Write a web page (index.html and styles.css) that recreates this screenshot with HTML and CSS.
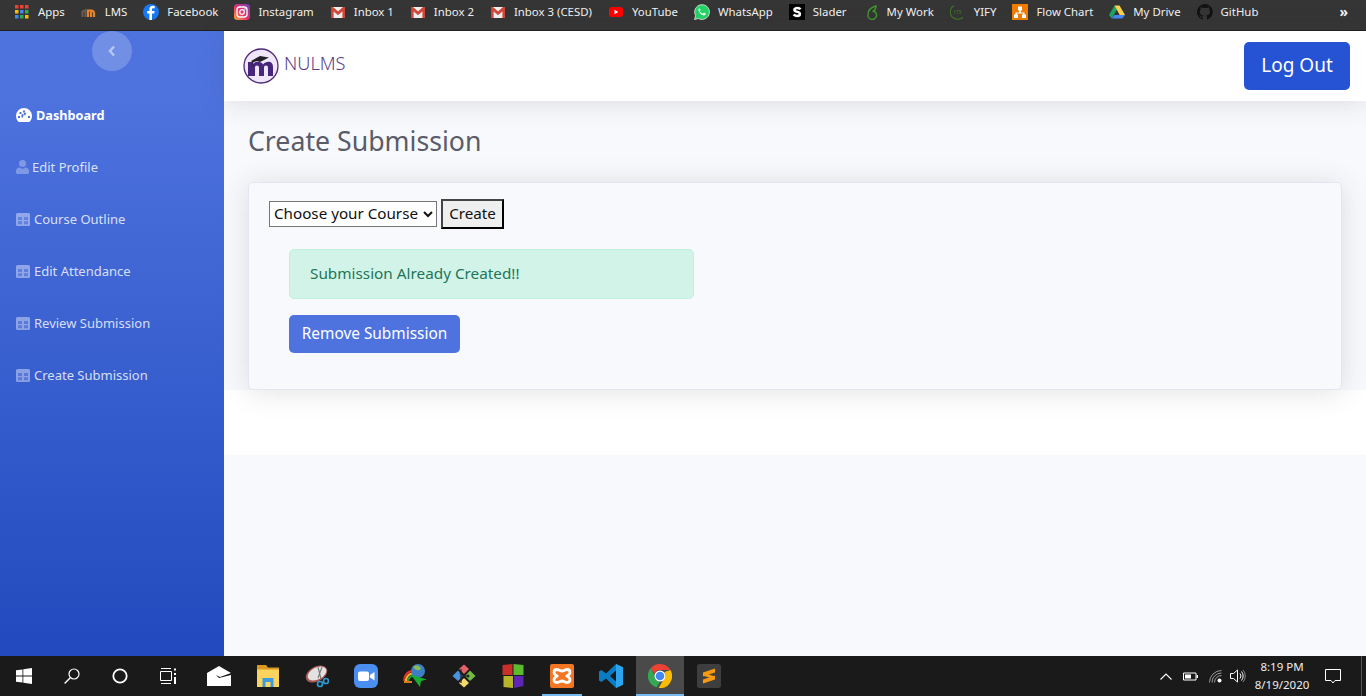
FILE: index.html
```html
<!DOCTYPE html>
<html lang="en">
<head>
<meta charset="utf-8">
<title>Create Submission</title>
<link rel="stylesheet" href="styles.css">
</head>
<body>
<svg class="defs" aria-hidden="true"><defs>
<symbol id="gmail" viewBox="0 0 16 16"><rect x="1" y="3" width="14" height="11" fill="#f1f1f1"/><path d="M3 5.500L8 10l5-4.500v2L8 11.500 3 7.500z" fill="#cfcfcf"/><path d="M1 3h2L8 7.500 13 3h2v11h-2.600V7.200L8 11 3.600 7.200V14H1z" fill="#d44638"/></symbol>
<symbol id="table" viewBox="0 0 14 13"><rect width="14" height="13" rx="1.500" fill-opacity=".55"/><path fill-rule="evenodd" d="M1.500 0h11A1.500 1.500 0 0 1 14 1.500v10a1.500 1.500 0 0 1-1.500 1.500h-11A1.500 1.500 0 0 1 0 11.500v-10A1.500 1.500 0 0 1 1.500 0zM2 4v3h4V4zm6 0v3h4V4zM2 8.200v3h4v-3zm6 0v3h4v-3z"/></symbol>
</defs></svg>

<nav class="bookmarks">
  <a class="bm"><svg class="ic" viewBox="-1 -1 16 16"><path fill="#ea4335" d="M0 0h3.500v3.500H0zM5 0h3.500v3.500H5zM10 0h3.500v3.500H10z"/><path fill="#fbbc05" d="M0 5h3.500v3.500H0z"/><path fill="#4285f4" d="M5 5h3.500v3.500H5zM0 10h3.500v3.500H0z"/><path fill="#34a853" d="M10 5h3.500v3.500H10zM5 10h3.500v3.500H5z"/><path fill="#fbbc05" d="M10 10h3.500v3.500H10z"/></svg><span>Apps</span></a>
  <a class="bm"><svg class="ic" viewBox="0 0 16 16"><path fill="none" stroke="#e8832a" stroke-width="2.200" d="M7 13V6.500h3.500a2.500 2.500 0 0 1 2.500 2.500v4M10 7v6"/><path fill="none" stroke="#6d5a4a" stroke-width="2" d="M1.500 13V7.500L4.500 6v7"/></svg><span>LMS</span></a>
  <a class="bm"><svg class="ic" viewBox="0 0 16 16"><circle cx="8" cy="8" r="8" fill="#1877f2"/><path fill="#fff" d="M9 16V9.500h2.200l.4-2.500H9V5.500c0-.8.400-1.300 1.400-1.300h1.300V2c-.6-.1-1.300-.2-2-.2-2 0-3.300 1.200-3.300 3.400V7H4.200v2.500h2.200V16z"/></svg><span>Facebook</span></a>
  <a class="bm"><svg class="ic" viewBox="0 0 16 16"><defs><linearGradient id="ig" x1="0" y1="1" x2="1" y2="0"><stop offset="0" stop-color="#fdb140"/><stop offset=".45" stop-color="#e8336b"/><stop offset="1" stop-color="#6a3fc8"/></linearGradient></defs><rect width="16" height="16" rx="3.500" fill="url(#ig)"/><rect x="3" y="3" width="10" height="10" rx="2.800" fill="none" stroke="#fff" stroke-width="1.300"/><circle cx="8" cy="8" r="2.300" fill="none" stroke="#fff" stroke-width="1.300"/><circle cx="11" cy="5" r=".8" fill="#fff"/></svg><span>Instagram</span></a>
  <a class="bm"><svg class="ic"><use href="#gmail"/></svg><span>Inbox 1</span></a>
  <a class="bm"><svg class="ic"><use href="#gmail"/></svg><span>Inbox 2</span></a>
  <a class="bm"><svg class="ic"><use href="#gmail"/></svg><span>Inbox 3 (CESD)</span></a>
  <a class="bm"><svg class="ic" viewBox="0 0 16 16"><rect x="1" y="3" width="14" height="10" rx="2.500" fill="#f00"/><path fill="#fff" d="M6.500 5.800v4.400L10.300 8z"/></svg><span>YouTube</span></a>
  <a class="bm"><svg class="ic" viewBox="0 0 16 16"><path fill="#25d366" stroke="#fff" stroke-width=".7" d="M.5 15.500l1.100-3.800A7.400 7.400 0 1 1 4.400 14.500z"/><path fill="#fff" d="M5.600 4.300c-.3 0-.8.400-1 1-.3 1.100.3 2.500 1.500 3.900 1.300 1.400 2.800 2.200 3.900 2.200.8 0 1.700-.6 1.800-1.300.1-.4 0-.6-.2-.7l-1.500-.7c-.2-.1-.4 0-.5.200l-.6.700c-.1.100-.3.200-.5.100-1.100-.5-2-1.300-2.600-2.400-.1-.2 0-.3.100-.4l.4-.6c.1-.2.100-.3 0-.5l-.6-1.300c-.1-.2-.4-.2-.6-.2z"/></svg><span>WhatsApp</span></a>
  <a class="bm"><svg class="ic" viewBox="0 0 16 16"><rect width="16" height="16" fill="#000"/><path fill="none" stroke="#fff" stroke-width="2.500" d="M11.500 5.200C10.800 4.200 9.600 4 8.400 4 6.700 4 5.300 4.700 5.400 5.900c.1 1.400 1.700 1.700 3 2 1.300.3 2.500.7 2.500 2 0 1.400-1.500 2-3 2-1.300 0-2.600-.4-3.300-1.300"/></svg><span>Slader</span></a>
  <a class="bm"><svg class="ic" viewBox="0 0 16 16"><path fill="none" stroke="#3f9a2e" stroke-width="1.400" d="M10.500 7A4.300 4.300 0 1 1 5 10.500C5 7 7.500 3.500 13 2c0 2.500-1 4.500-3.500 5.500"/></svg><span>My Work</span></a>
  <a class="bm"><svg class="ic" viewBox="0 0 16 16"><path fill="none" stroke="#3e7d26" stroke-width="1.100" d="M4 1.800A7 7 0 0 0 4 14.200c2.500 1.300 6 1.300 9-.7"/><text x="3.600" y="10" class="yts">YTS</text></svg><span>YIFY</span></a>
  <a class="bm"><svg class="ic" viewBox="0 0 16 16"><rect width="16" height="16" fill="#ef7d00"/><path fill="#fff" d="M6 2.500h4v4H9v2h3.500v2H14v3.500h-4v-3.500h1V9.500H5v1.000h1V14H2v-3.500h1.500v-2H7v-2H6z"/></svg><span>Flow Chart</span></a>
  <a class="bm"><svg class="ic" viewBox="0 0 16 16"><path fill="#1fa463" d="M5.500 1.500L0 11l2.700 3.500L8 5.500z"/><path fill="#ffd04b" d="M5.500 1.500h5L16 11h-5.300z"/><path fill="#4688f4" d="M2.700 14.500h10.600L16 11H5.300z"/></svg><span>My Drive</span></a>
  <a class="bm"><svg class="ic" viewBox="0 0 16 16"><path fill="#111" d="M8 0a8 8 0 0 0-2.500 15.600c.4.100.5-.2.500-.4v-1.400c-2.200.5-2.700-1-2.700-1-.4-.9-.9-1.200-.9-1.200-.7-.5.100-.5.100-.5.800.1 1.200.8 1.200.8.700 1.200 1.900.9 2.300.7.100-.5.300-.9.500-1.100-1.800-.2-3.700-.9-3.700-4 0-.9.300-1.600.8-2.100-.1-.2-.4-1 .1-2.100 0 0 .7-.2 2.200.8a7.600 7.600 0 0 1 4 0c1.500-1 2.200-.8 2.200-.8.400 1.100.2 1.900.1 2.100.5.600.8 1.300.8 2.100 0 3.100-1.900 3.700-3.700 3.900.3.300.6.800.6 1.500v2.200c0 .2.100.5.600.4A8 8 0 0 0 8 0z"/></svg><span>GitHub</span></a>
  <a class="bm-more">»</a>
</nav>

<div class="app">
  <aside class="sidebar">
    <button class="toggle" type="button" aria-label="Collapse"><svg viewBox="0 0 8 12"><path d="M6 1.500L2 6l4 4.500" fill="none" stroke="currentColor" stroke-width="2.400"/></svg></button>
    <ul class="nav">
      <li class="nav-item active"><svg class="nav-ic gauge" viewBox="0 0 16 14"><path fill="currentColor" fill-rule="evenodd" d="M8 0a8 8 0 0 1 8 8c0 2-.7 3.800-1.900 5.200-.3.400-.7.800-1.300.8H3.200c-.6 0-1-.4-1.300-.8A8 8 0 0 1 0 8a8 8 0 0 1 8-8zM7 2.500v2h2v-2zM3.500 4v2h2V4zM2 8v2h2V8zm10 0v2h2V8zm-1.600-3.400L8.600 9a1.800 1.800 0 1 0-1.800.8L8 5z"/></svg><span>Dashboard</span></li>
      <li class="nav-item"><svg class="nav-ic person" viewBox="0 0 13 14"><circle cx="6.500" cy="3.500" r="3.500" fill="currentColor"/><path fill="currentColor" d="M3.500 7.500C1.500 7.500 0 9 0 11v1.500C0 13.300.7 14 1.500 14h10c.8 0 1.500-.7 1.500-1.500V11c0-2-1.500-3.500-3.500-3.500a5 5 0 0 1-6 0z"/></svg><span>Edit Profile</span></li>
      <li class="nav-item"><svg class="nav-ic grid"><use href="#table"/></svg><span>Course Outline</span></li>
      <li class="nav-item"><svg class="nav-ic grid"><use href="#table"/></svg><span>Edit Attendance</span></li>
      <li class="nav-item"><svg class="nav-ic grid"><use href="#table"/></svg><span>Review Submission</span></li>
      <li class="nav-item"><svg class="nav-ic grid"><use href="#table"/></svg><span>Create Submission</span></li>
    </ul>
  </aside>

  <div class="main">
    <header class="topbar">
      <div class="brand">
        <svg class="logo" viewBox="0 0 36 36"><circle cx="18" cy="18" r="17" fill="#efe6fa" stroke="#4f2a78" stroke-width="1.300"/><path fill="#47267c" d="M5 28V14h5v2c1.500-1.500 3-2.200 5-2.200 2.300 0 4 .9 5 2.700 1.500-1.800 3.300-2.700 5.500-2.700 3 0 4.500 2 4.500 5.200V28h-5v-8c0-1.600-.7-2.400-2-2.400s-2 .8-2 2.400v8h-5v-8c0-1.600-.7-2.400-2-2.400s-2 .8-2 2.400v8z"/><path fill="#232025" d="M8 13l9-5 9 1.500-9 4.500-3-1c-1.500.3-2.800.8-3.800 1.500v4H9.500v-4.300z"/></svg>
        <span class="brand-name">NULMS</span>
      </div>
      <button class="logout" type="button">Log Out</button>
    </header>

    <section class="content">
      <h1 class="page-title">Create Submission</h1>
      <div class="card">
        <form class="course-form">
          <select class="course-select"><option>Choose your Course</option></select>
          <button class="create" type="button">Create</button>
        </form>
        <div class="result">
          <div class="alert">Submission Already Created!!</div>
          <button class="remove" type="button">Remove Submission</button>
        </div>
      </div>
    </section>
    <footer class="footer"></footer>
    <div class="filler"></div>
  </div>
</div>

<div class="taskbar">
  <div class="sys">
    <span class="tb-slot"><svg class="tb-ic" viewBox="0 0 16 16"><path fill="#fff" d="M0 2.300l6.500-.9v6.200H0zM7.300 1.300L16 0v7.600H7.300zM0 8.400h6.500v6.200L0 13.700zM7.300 8.400H16V16l-8.700-1.300z"/></svg></span>
    <span class="tb-slot"><svg class="tb-ic" viewBox="0 0 16 16"><circle cx="10" cy="6" r="5" fill="none" stroke="#fff" stroke-width="1.200"/><path d="M6.300 9.700L.6 15.400" stroke="#fff" stroke-width="1.400"/></svg></span>
    <span class="tb-slot"><svg class="tb-ic" viewBox="0 0 16 16"><circle cx="8" cy="8" r="6.700" fill="none" stroke="#fff" stroke-width="1.800"/></svg></span>
    <span class="tb-slot"><svg class="tb-ic" viewBox="0 0 16 16"><path fill="none" stroke="#fff" d="M1 .5h10M1 15.500h10M.5 3.500h11v9H.5z"/><path fill="#fff" d="M14 .5h2v2h-2zM14 5h2v2h-2zM14 9h2v7h-2z"/></svg></span>
  </div>
  <div class="apps">
    <span class="app-slot"><svg class="app-ic" viewBox="0 0 24 20"><path fill="#fff" d="M0 7L12 0l12 7-11 4L9 9l3 3 12-3v11H0z"/></svg></span>
    <span class="app-slot"><svg class="app-ic" viewBox="0 0 24 24"><path fill="#d99a1f" d="M1 1h9l2 2.500h11V23H1z"/><path fill="#fbd35f" d="M1 5.500h22V23H1z"/><path fill="#3b9ae0" d="M6.500 14h11v9h-3v-5h-5v5h-3z"/></svg></span>
    <span class="app-slot"><svg class="app-ic" viewBox="0 0 24 24"><ellipse cx="11.500" cy="10" rx="11.500" ry="7.500" transform="rotate(-28 11.500 10)" fill="#a85a5a"/><ellipse cx="12" cy="9.500" rx="10" ry="6" transform="rotate(-28 12 9.500)" fill="#e4e2e0"/><path d="M13 3l3 12M17 3l-4 11" stroke="#777" stroke-width="1.100"/><circle cx="15" cy="20" r="2.500" fill="none" stroke="#2f9ad0" stroke-width="1.700"/><circle cx="21" cy="17" r="2.500" fill="none" stroke="#2f9ad0" stroke-width="1.700"/></svg></span>
    <span class="app-slot"><svg class="app-ic" viewBox="0 0 24 24"><rect width="24" height="24" rx="6" fill="#4a8ff0"/><rect x="4" y="7.500" width="11" height="9.500" rx="2" fill="#fff"/><path fill="#fff" d="M16 11l4.500-3v8.500L16 13.500z"/></svg></span>
    <span class="app-slot"><svg class="app-ic" viewBox="0 0 24 24"><path d="M1.200 17a9 9 0 0 1 9-10" fill="none" stroke="#e2332b" stroke-width="2"/><path d="M3.200 18a7 7 0 0 1 7-8.500" fill="none" stroke="#f0c020" stroke-width="2"/><path d="M5.200 18a5 5 0 0 1 5-6" fill="none" stroke="#2aa33a" stroke-width="2"/><path d="M1 18h8" stroke="#d97a20" stroke-width="2"/><circle cx="15" cy="7" r="7" fill="#3c7fc4"/><path d="M10 3c3-2.500 7-1.500 8 2-3 2.500-6 .5-8-2z" fill="#8bbb55"/><path fill="#17b02e" d="M8 11l16 4.500-6 1.500-1 6z"/></svg></span>
    <span class="app-slot"><svg class="app-ic" viewBox="0 0 24 24"><path fill="#e2636a" d="M12 .5L17 5l-5 5-5-5z"/><path fill="#4b92de" d="M6 6.500L11 12l-5 5-5.500-5z"/><path fill="#75bb43" d="M18 6.500l5.500 5.500-5.500 5-5-5z"/><path fill="#f5d96a" d="M12 14l5 5-5 4.500L7 19z"/><circle cx="9" cy="9" r="1.500" fill="#222"/><circle cx="16" cy="12" r="1.500" fill="#222"/><path d="M9 5v14M16 12H9" stroke="#222" stroke-width="1.200"/></svg></span>
    <span class="app-slot"><svg class="app-ic office" viewBox="0 0 21 24"><path fill="#c9302a" d="M0 1l10-1v11H0z"/><path fill="#5cbb2d" d="M11 0l10 1v10H11z"/><path fill="#b6b52c" d="M1 12h9.500v12L1 23z"/><path fill="#5e26b4" d="M11.500 12H21v10l-9.500 2z"/></svg></span>
    <span class="app-slot running"><svg class="app-ic" viewBox="0 0 24 24"><rect width="24" height="24" rx="2" fill="#f37623"/><path fill="none" stroke="#fff" stroke-width="2.800" d="M7 5.500c1.800 0 3 1.500 5 1.500s3.200-1.500 5-1.500c2 0 3 1.500 3 3 0 2-2 2.500-3 3.500 1 1 3 1.500 3 3.500 0 1.500-1 3-3 3-1.800 0-3-1.500-5-1.500S8.800 18.500 7 18.500c-2 0-3-1.500-3-3 0-2 2-2.500 3-3.500-1-1-3-1.500-3-3.500 0-1.500 1-3 3-3z"/></svg></span>
    <span class="app-slot"><svg class="app-ic" viewBox="0 0 24 24"><path fill="#0a7cc4" d="M17 0l7 3.200v17.600L17 24 7 14.500l-4.500 3.500L0 16.500v-9L2.500 6 7 9.500zM17 6.500L11 12l6 5.500z"/><path fill="#2aa5ee" d="M17 0l7 3.200v17.600L17 24z"/></svg></span>
    <span class="app-slot active"><svg class="app-ic" viewBox="0 0 24 24"><path fill="#ea4335" d="M12 0a12 12 0 0 1 10.400 6H12a6 6 0 0 0-5.600 3.800L2.600 4.300A12 12 0 0 1 12 0z"/><path fill="#34a853" d="M2.600 4.300l5.200 9A5 5 0 0 0 12 18l-3.400 5.500A12 12 0 0 1 2.600 4.300z"/><path fill="#fbbc05" d="M22.400 6A12 12 0 0 1 10.600 24l5.300-9.100A6 6 0 0 0 16.500 8z"/><circle cx="12" cy="12" r="5.500" fill="#fff"/><circle cx="12" cy="12" r="4.300" fill="#4285f4"/></svg></span>
    <span class="app-slot"><svg class="app-ic" viewBox="0 0 24 24"><rect width="24" height="24" rx="2.500" fill="#3e3e3e"/><path fill="#f89a10" d="M18 4.500v4L6 12.500v-4zM18 11.500v4L6 19.500v-4zM6 8.500l12 4v3L6 11.500z"/></svg></span>
  </div>
  <div class="tray">
    <svg class="tray-caret" viewBox="0 0 12 7"><path d="M.5 6.500L6 1l5.500 5.500" fill="none" stroke="#fff" stroke-width="1.100"/></svg>
    <svg class="tray-bat" viewBox="0 0 15 9"><path fill="none" stroke="#fff" d="M.5 1h12.500v7H.5z"/><path fill="#fff" d="M2 2.500h6v4H2zM13.500 3H15v3h-1.500z"/></svg>
    <svg class="tray-wifi" viewBox="0 0 13 13"><g fill="none" stroke="#9a9a9a"><path d="M.5 12.500a12 12 0 0 1 12-12M3 12.500A9.500 9.500 0 0 1 12.500 3M5.500 12.500a7 7 0 0 1 7-7"/></g><circle cx="10.500" cy="10.500" r="2" fill="#fff"/></svg>
    <svg class="tray-vol" viewBox="0 0 16 16"><path fill="none" stroke="#fff" d="M.5 5.500h3L7.500 2v12l-4-3.500h-3zM10 5.500a4 4 0 0 1 0 5M11.500 3.500a7 7 0 0 1 0 9"/><path fill="none" stroke="#888" d="M13 2a9 9 0 0 1 0 12"/></svg>
    <div class="clock"><span>8:19 PM</span><span>8/19/2020</span></div>
    <svg class="tray-note" viewBox="0 0 16 16"><path fill="none" stroke="#fff" d="M.5 1.500h15v11H10L8 15l-2-2.500H.5z"/></svg>
    <span class="peek"></span>
  </div>
</div>
</body>
</html>
```
FILE: styles.css
```css
* { box-sizing: border-box; }
html, body { margin: 0; height: 100%; }
body {
  display: flex;
  flex-direction: column;
  height: 100vh;
  overflow: hidden;
  font-family: "Noto Sans", "Liberation Sans", sans-serif;
  background: #f8f9fc;
}
.defs { position: absolute; width: 0; height: 0; }

/* bookmarks */
.bookmarks {
  flex: 0 0 31px;
  display: flex;
  align-items: center;
  gap: 16px;
  padding: 0 0 7px 14px;
  background: #353535;
  border-bottom: 1px solid #1f1f1f;
  color: #f2f2f2;
  font-size: 11.4px;
}
.bm { display: flex; align-items: center; gap: 8px; white-space: nowrap; }
.ic { width: 16px; height: 16px; flex: none; display: block; }
.yts { font: italic 5px "Noto Sans", sans-serif; fill: #3e7d26; }
.bm-more { margin-left: auto; margin-right: 18px; font-size: 14px; font-weight: 700; line-height: 1; }

/* frame */
.app { flex: 1; display: flex; min-height: 0; }

.sidebar {
  flex: 0 0 224px;
  background: linear-gradient(180deg, #4e73df 10%, #224abe 100%);
  display: flex;
  flex-direction: column;
  align-items: stretch;
}
.toggle {
  align-self: center;
  width: 40px;
  height: 40px;
  border: 0;
  border-radius: 50%;
  background: rgba(255, 255, 255, .2);
  color: rgba(255, 255, 255, .5);
  padding: 0;
  display: flex;
  align-items: center;
  justify-content: center;
}
.toggle svg { width: 8px; height: 12px; }
.nav { list-style: none; margin: 18px 0 0; padding: 0; }
.nav-item {
  height: 52px;
  display: flex;
  align-items: center;
  gap: 4px;
  padding-left: 16px;
  font-size: 13px;
  color: rgba(255, 255, 255, .8);
}
.nav-item.active { color: #fff; font-weight: 700; font-size: 12.700px; }
.nav-ic { flex: none; color: rgba(255, 255, 255, .3); fill: rgba(255, 255, 255, .3); }
.active .nav-ic { color: #fff; }
.gauge { width: 16px; height: 14px; }
.person { width: 13px; height: 14px; margin-right: -1px; }
.grid { width: 14px; height: 13px; }

.main { flex: 1; min-width: 0; display: flex; flex-direction: column; }

.topbar {
  flex: 0 0 70px;
  position: relative;
  background: #fff;
  box-shadow: 0 2px 28px rgba(58, 59, 69, .15);
  display: flex;
  align-items: center;
  justify-content: space-between;
  padding: 0 16px 0 19px;
}
.brand { display: flex; align-items: center; gap: 5px; color: #5a3c86; }
.logo { width: 36px; height: 36px; display: block; }
.brand-name { font-size: 18.200px; font-weight: 300; margin-bottom: 6px; }
.logout {
  width: 106px;
  height: 48px;
  padding: 0 0 3px;
  background: #2653d4;
  color: #fff;
  border: 0;
  border-radius: 5px;
  font: 400 19px "Noto Sans", sans-serif;
}

.content { padding: 24px 24px 0; flex: 0 0 289px; }
.page-title {
  margin: 0 0 25px;
  font-size: 26.700px;
  line-height: 32px;
  font-weight: 400;
  color: #5a5c69;
}
.card {
  position: relative;
  height: 208px;
  background: #f8f9fc;
  border: 1px solid #e3e6f0;
  border-radius: 5px;
  box-shadow: 0 2px 28px rgba(58, 59, 69, .15);
  padding: 16px 20px;
}
.course-form { display: flex; align-items: center; gap: 4px; height: 30px; }
.course-select {
  width: 168px;
  height: 26px;
  padding-bottom: 2px;
  font: 400 15.200px "Noto Sans", sans-serif;
  color: #111;
  background: #fff;
  border: 1px solid #767676;
  border-radius: 0;
}
.create {
  width: 63px;
  height: 30px;
  padding: 0 0 2px;
  font: 400 15.200px "Noto Sans", sans-serif;
  color: #111;
  background: #efefef;
  border: 2px outset #444;
}
.result { margin: 20px 0 0 20px; width: 405px; }
.alert {
  height: 50px;
  padding: 11px 20px 13px;
  line-height: 24px;
  font-size: 15.300px;
  color: #1e7558;
  background: #d2f4e8;
  border: 1px solid #bff0de;
  border-radius: 5px;
  margin-bottom: 16px;
}
.remove {
  width: 171px;
  height: 38px;
  padding: 0 0 2px;
  font: 400 15.400px "Noto Sans", sans-serif;
  color: #fff;
  background: #4e73df;
  border: 0;
  border-radius: 5px;
}
.footer { flex: 0 0 65px; background: #fff; }
.filler { flex: 1; }

/* taskbar */
.taskbar {
  flex: 0 0 40px;
  display: flex;
  align-items: stretch;
  background: #1a1a1a;
}
.sys { display: flex; flex: 0 0 195px; }
.tb-slot { width: 48px; display: flex; align-items: center; justify-content: center; }
.tb-ic { width: 16px; height: 16px; }
.apps { display: flex; gap: 1px; }
.app-slot {
  position: relative;
  width: 48px;
  display: flex;
  align-items: center;
  justify-content: center;
}
.app-ic { width: 24px; height: 24px; }
.app-slot.active { background: #4a4a4a; }
.app-slot.active::after,
.app-slot.running::after {
  content: "";
  position: absolute;
  left: 4px;
  right: 4px;
  bottom: 0;
  height: 2px;
  background: #76b9ed;
}
.app-slot.active::after { left: 0; right: 0; }
.tray { margin-left: auto; display: flex; align-items: center; position: relative; color: #fff; }
.tray-caret { width: 12px; height: 7px; margin-right: 11px; }
.tray-bat { width: 15px; height: 9px; margin-right: 11px; }
.tray-wifi { width: 13px; height: 13px; margin-right: 8px; }
.tray-vol { width: 16px; height: 16px; margin-right: 14px; }
.clock {
  display: flex;
  flex-direction: column;
  align-items: center;
  width: 44px;
  font-size: 11.500px;
  line-height: 18px;
  white-space: nowrap;
  color: #eee;
  margin-right: 21px;
}
.tray-note { width: 16px; height: 16px; margin-right: 25px; }
.peek { position: absolute; right: 4px; top: 0; bottom: 0; width: 1px; background: #555; }
```
